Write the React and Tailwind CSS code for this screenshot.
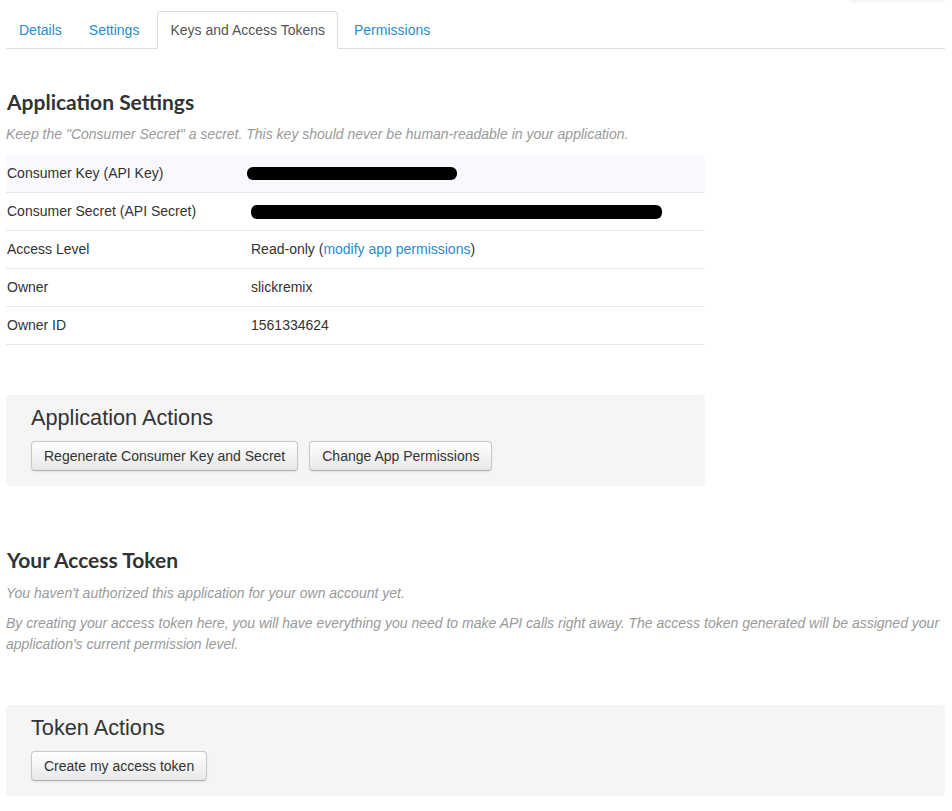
import React from "react";

const sans = { fontFamily: '"Liberation Sans", Arial, sans-serif' };

function Tab({ label, active, className }) {
  return (
    <li className={"-mb-px " + (className || "")}>
      <a
        className={
          "block rounded-t-[4px] border px-3 pt-[8px] pb-[8px] text-[14px] leading-5 " +
          (active
            ? "border-[#dddddd] border-b-white bg-white text-[#555555]"
            : "border-transparent text-[#2b8bce]")
        }
        href="#"
      >
        {label}
      </a>
    </li>
  );
}

function Row({ label, children, shaded }) {
  return (
    <div
      className={
        "flex h-[38px] items-center border-b border-[#e8e8e8] text-[14px] text-[#333333] " +
        (shaded ? "bg-[#f9f9fd]" : "")
      }
    >
      <div className="w-[245px] pl-px">{label}</div>
      <div className="flex-1">{children}</div>
    </div>
  );
}

function Btn({ children }) {
  return (
    <button className="h-[30px] rounded-[4px] border border-[#c8c8c8] border-b-[#b0b0b0] bg-gradient-to-b from-white to-[#e8e8e8] px-[12px] text-[14px] leading-5 text-[#333333] shadow-[0_1px_2px_rgba(0,0,0,0.08)]">
      {children}
    </button>
  );
}

function H2({ children, className }) {
  return (
    <h2
      className={"pl-px text-[21px] font-bold leading-[30px] text-[#333333] " + (className || "")}
      style={{ fontFamily: 'Lato, "Liberation Sans", sans-serif' }}
    >
      {children}
    </h2>
  );
}

export default function App() {
  return (
    <div className="relative min-h-[811px] bg-white pt-[11px]" style={sans}>
      <div className="absolute right-[7px] top-0 h-[2px] w-[95px] rounded-b-[4px] bg-[#f7f7f7] shadow-[0_1px_1px_rgba(0,0,0,0.04)]" />
      <div className="ml-[6px] mr-[7px]">
        <ul className="flex border-b border-[#dddddd]">
          <li className="-mb-px mr-[3px]">
            <a className="block rounded-t-[4px] border border-transparent pl-[12px] pr-[10px] pt-[8px] pb-[8px] text-[14px] leading-5 text-[#2b8bce]" href="#">
              Details
            </a>
          </li>
          <Tab label="Settings" className="mr-[5px]" />
          <Tab label="Keys and Access Tokens" active className="mr-[3px]" />
          <Tab label="Permissions" />
        </ul>

        <H2 className="mt-[38px]">Application Settings</H2>
        <p className="mt-[7px] text-[14px] italic leading-5 text-[#9a9a9a]">
          Keep the "Consumer Secret" a secret. This key should never be human-readable in your application.
        </p>

        <div className="mt-[11px] w-[699px]">
          <Row label="Consumer Key (API Key)" shaded>
            <div className="ml-[-4px] h-[13px] w-[210px] rounded-[6px] bg-black" />
          </Row>
          <Row label="Consumer Secret (API Secret)">
            <div className="h-[14px] w-[411px] rounded-[6px] bg-black" />
          </Row>
          <Row label="Access Level">
            Read-only (<a href="#" className="text-[#2b8bce]">modify app permissions</a>)
          </Row>
          <Row label="Owner">slickremix</Row>
          <Row label="Owner ID">1561334624</Row>
        </div>

        <div className="mt-[50px] w-[699px] rounded-[4px] bg-[#f5f5f5] pl-[25px] pt-[11px] pb-[15px]">
          <h3 className="text-[21.7px] leading-6 text-[#333333]">Application Actions</h3>
          <div className="mt-[11px] flex gap-[11px]">
            <Btn>Regenerate Consumer Key and Secret</Btn>
            <Btn>Change App Permissions</Btn>
          </div>
        </div>

        <H2 className="mt-[59px]">Your Access Token</H2>
        <p className="mt-[8px] text-[14px] italic leading-5 text-[#9a9a9a]">
          You haven't authorized this application for your own account yet.
        </p>
        <p className="mt-[10px] text-[14px] italic leading-[21px] text-[#9a9a9a]">
          By creating your access token here, you will have everything you need to make API calls right away. The access token generated will be assigned your application's current permission level.
        </p>

        <div className="mt-[50px] rounded-[4px] bg-[#f5f5f5] pl-[25px] pt-[11px] pb-[15px]">
          <h3 className="text-[21.7px] leading-6 text-[#333333]">Token Actions</h3>
          <div className="mt-[11px] flex">
            <Btn>Create my access token</Btn>
          </div>
        </div>
      </div>
    </div>
  );
}
